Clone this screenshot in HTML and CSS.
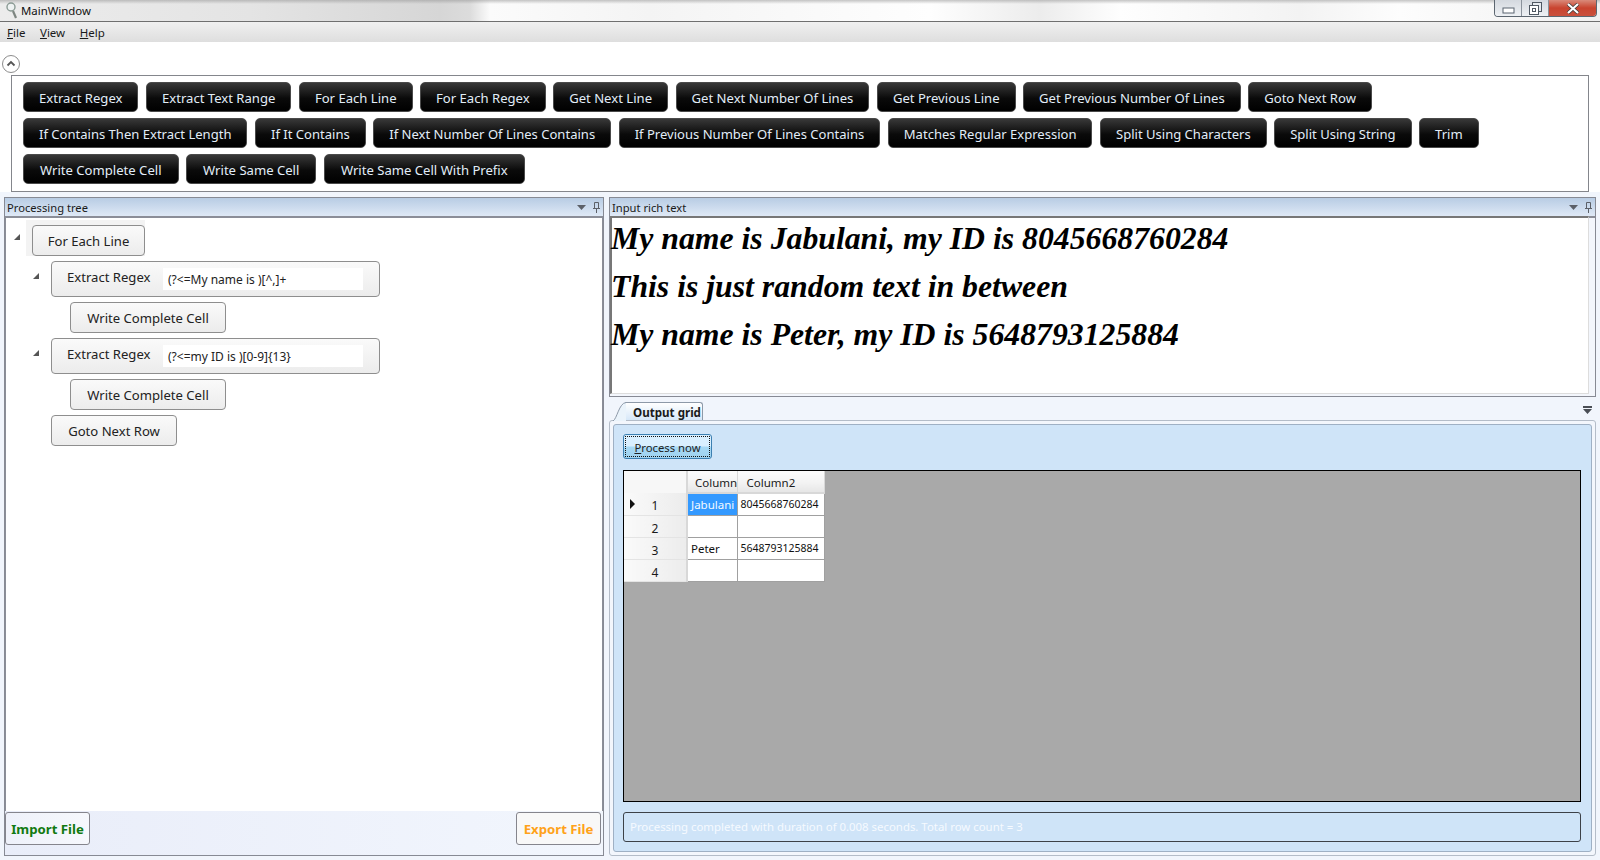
FILE: index.html
```html
<!doctype html>
<html lang="en">
  <head>
    <meta charset="UTF-8" />
    <title>MainWindow</title>
    <link rel="stylesheet" href="styles.css">
  </head>

  <body>
    <div class="titlebar">
      <svg class="app-icon" width="16" height="20" viewBox="0 0 16 20">
        <circle cx="7" cy="6" r="4" fill="#eef2f2" stroke="#8a9a94" stroke-width="1.4"></circle>
        <path d="M9 10l3 7" stroke="#7d8580" stroke-width="2.2" fill="none"></path>
      </svg>
      <span class="title-text">MainWindow</span>
      <div class="window-buttons">
        <div class="win-btn">
          <svg class="win-min" width="13" height="7" viewBox="0 0 13 7"><rect x="1" y="1" width="11" height="5" fill="#fff" stroke="#5a6470"></rect></svg>
        </div>
        <div class="win-btn">
          <svg width="13" height="13" viewBox="0 0 13 13"><rect x="3.5" y="0.5" width="9" height="9" fill="#e8ecf0" stroke="#4f5862"></rect><rect x="0.5" y="3.5" width="9" height="9" fill="#fff" stroke="#4f5862"></rect><rect x="3.5" y="6.5" width="3" height="3" fill="none" stroke="#4f5862"></rect></svg>
        </div>
        <div class="win-btn win-close">
          <svg width="14" height="11" viewBox="0 0 14 11"><path d="M2 1l10 9M12 1L2 10" stroke="#3c3c3c" stroke-width="3.6"></path><path d="M2 1l10 9M12 1L2 10" stroke="#fff" stroke-width="2.2"></path></svg>
        </div>
      </div>
    </div>

    <div class="menubar">
      <span><u>F</u>ile</span>
      <span><u>V</u>iew</span>
      <span><u>H</u>elp</span>
    </div>

    <div class="toolbox-area">
      <div class="expander">
        <svg width="18" height="18" viewBox="0 0 18 18">
          <circle cx="9" cy="9" r="8.5" fill="#fff" stroke="#8d8d8d"></circle>
          <path d="M5.5 10.5L9 7l3.5 3.5" fill="none" stroke="#555" stroke-width="1.8"></path>
        </svg>
      </div>
      <div class="toolbox">
        <div class="tool-row">
          <button class="tool">Extract Regex</button>
          <button class="tool">Extract Text Range</button>
          <button class="tool">For Each Line</button>
          <button class="tool">For Each Regex</button>
          <button class="tool">Get Next Line</button>
          <button class="tool">Get Next Number Of Lines</button>
          <button class="tool">Get Previous Line</button>
          <button class="tool">Get Previous Number Of Lines</button>
          <button class="tool">Goto Next Row</button>
        </div>
        <div class="tool-row tool-row-if">
          <button class="tool">If Contains Then Extract Length</button>
          <button class="tool">If It Contains</button>
          <button class="tool">If Next Number Of Lines Contains</button>
          <button class="tool">If Previous Number Of Lines Contains</button>
          <button class="tool">Matches Regular Expression</button>
          <button class="tool">Split Using Characters</button>
          <button class="tool">Split Using String</button>
          <button class="tool">Trim</button>
        </div>
        <div class="tool-row tool-row-write">
          <button class="tool">Write Complete Cell</button>
          <button class="tool">Write Same Cell</button>
          <button class="tool">Write Same Cell With Prefix</button>
        </div>
      </div>
    </div>

    <div class="dock">
      <div class="pane left-pane">
        <div class="pane-header">
          <span>Processing tree</span>
          <div class="pane-icons">
            <svg width="9" height="5" viewBox="0 0 9 5"><path d="M0 0h9L4.5 5z" fill="#5c6068"></path></svg>
            <svg width="7" height="11" viewBox="0 0 7 11"><path d="M1.5 0.5h4v6h-4zM0 6.5h7M3.5 7v4" fill="none" stroke="#5c6068"></path></svg>
          </div>
        </div>
        <div class="tree">
          <div class="tree-row">
            <span class="tree-arrow"></span>
            <div class="tree-selected"><button class="node node-each">For Each Line</button></div>
          </div>
          <div class="tree-row indent-1">
            <span class="tree-arrow"></span>
            <div class="node node-group">
              <span class="group-label">Extract Regex</span>
              <span class="regex-input">(?&lt;=My name is )[^,]+</span>
            </div>
          </div>
          <div class="tree-row indent-2"><button class="node node-write">Write Complete Cell</button></div>
          <div class="tree-row indent-1">
            <span class="tree-arrow"></span>
            <div class="node node-group">
              <span class="group-label">Extract Regex</span>
              <span class="regex-input">(?&lt;=my ID is )[0-9]{13}</span>
            </div>
          </div>
          <div class="tree-row indent-2"><button class="node node-write">Write Complete Cell</button></div>
          <div class="tree-row indent-3"><button class="node node-goto">Goto Next Row</button></div>
        </div>
        <div class="pane-footer">
          <button class="file-btn import-btn">Import File</button>
          <button class="file-btn export-btn">Export File</button>
        </div>
      </div>

      <div class="right-col">
        <div class="pane input-pane">
          <div class="pane-header">
            <span>Input rich text</span>
            <div class="pane-icons">
              <svg width="9" height="5" viewBox="0 0 9 5"><path d="M0 0h9L4.5 5z" fill="#5c6068"></path></svg>
              <svg width="7" height="11" viewBox="0 0 7 11"><path d="M1.5 0.5h4v6h-4zM0 6.5h7M3.5 7v4" fill="none" stroke="#5c6068"></path></svg>
            </div>
          </div>
          <div class="rich-text">
            <p>My name is Jabulani, my ID is 8045668760284</p>
            <p>This is just random text in between</p>
            <p>My name is Peter, my ID is 5648793125884</p>
          </div>
        </div>

        <div class="tab-strip">
          <div class="tab">
            <svg class="tab-curve" width="13" height="19" viewBox="0 0 13 19"><path d="M0 19C4 17 6 1 13 0.5V19z" fill="#eaf3fb"></path><path d="M0 19C4 17 6 1 13 0.5" fill="none" stroke="#8d99a8"></path></svg>
            Output grid
          </div>
          <svg class="tab-menu" width="9" height="8" viewBox="0 0 9 8"><path d="M0 0h9v2H0zM0 3h9L4.5 8z" fill="#4a4e55"></path></svg>
        </div>
        <div class="tab-body">
          <div class="tab-inner">
            <button class="process-btn"><span><u>P</u>rocess now</span></button>
            <div class="grid-view">
              <table class="grid">
                <tr class="grid-head">
                  <th class="row-head"></th>
                  <th class="col-1">Column</th>
                  <th class="col-2">Column2</th>
                </tr>
                <tr>
                  <th class="row-head"><span class="row-mark"></span>1</th>
                  <td class="cell-selected">Jabulani</td>
                  <td class="cell-num">8045668760284</td>
                </tr>
                <tr>
                  <th class="row-head">2</th>
                  <td></td>
                  <td></td>
                </tr>
                <tr>
                  <th class="row-head">3</th>
                  <td>Peter</td>
                  <td class="cell-num">5648793125884</td>
                </tr>
                <tr>
                  <th class="row-head">4</th>
                  <td></td>
                  <td></td>
                </tr>
              </table>
            </div>
            <div class="status-box">Processing completed with duration of 0.008 seconds. Total row count = 3</div>
          </div>
        </div>
      </div>
    </div>
  </body>
</html>
```

FILE: styles.css
```css
* {
  box-sizing: border-box;
  padding: 0;
  margin: 0;
}

html,
body {
  width: 1600px;
  height: 860px;
  overflow: hidden;
}

body {
  display: flex;
  flex-direction: column;
  background: #f1f5fc;
  font-family: 'Noto Sans', sans-serif;
  font-size: 13px;
  color: #1a1a1a;
}

button {
  font-family: inherit;
}

/* title bar, the blurred desktop behind the glass is only hinted */
.titlebar {
  display: flex;
  align-items: center;
  height: 22px;
  flex: none;
  padding-left: 4px;
  border-bottom: 1px solid #6f6f6f;
  background:
    linear-gradient(180deg, rgba(150, 150, 150, 0.55) 0, rgba(255, 255, 255, 0) 4px),
    linear-gradient(90deg, #ececec 0, #e4e4e4 250px, #d6d6d6 440px, #dcdcdc 470px, #fbfbfb 490px, #f4f4f4 650px, #fefefe 930px, #ececec 1040px, #fefefe 1120px, #f3f3f3 1300px, #fdfdfd 1400px, #f0f0f0 1600px);
}

.app-icon {
  flex: none;
}

.title-text {
  margin-left: 1px;
  font-size: 11.4px;
  color: #111;
}

.window-buttons {
  display: flex;
  align-self: flex-start;
  margin-left: auto;
  margin-right: 3px;
  height: 17px;
  border: 1px solid #5c6670;
  border-top: none;
  border-radius: 0 0 4px 4px;
  overflow: hidden;
}

.win-btn {
  display: flex;
  align-items: center;
  justify-content: center;
  width: 27px;
  background: linear-gradient(180deg, #d4d9df, #eef1f4);
  border-right: 1px solid #8a929b;
}

.win-min {
  margin-top: 4px;
}

.win-close {
  width: 47px;
  border-right: none;
  background: linear-gradient(180deg, #d98a7a 0, #c9442f 50%, #c9503c 100%);
}

.menubar {
  display: flex;
  align-items: center;
  gap: 14.6px;
  height: 20px;
  flex: none;
  padding-left: 7px;
  font-size: 11.5px;
  background: linear-gradient(180deg, #f0f0f0, #dedede);
}

.toolbox-area {
  flex: none;
  height: 150px;
  padding: 13px 11px 0 2px;
  background: #fff;
}

.expander {
  height: 18px;
  margin-bottom: 2px;
}

.expander svg {
  display: block;
}

.toolbox {
  display: flex;
  flex-direction: column;
  gap: 6px;
  height: 117px;
  margin-left: 9px;
  padding: 6px 11px;
  border: 1px solid #84868c;
}

.tool-row {
  display: flex;
  gap: 7.5px;
}

.tool {
  height: 30px;
  padding: 1px 15px 0;
  border: 1px solid #4a4a4a;
  border-radius: 5px;
  background: linear-gradient(180deg, #383838 0, #0a0a0a 55%, #000 100%);
  color: #e2edf8;
  font-size: 13.1px;
}

.tool-row-if .tool {
  font-size: 13.05px;
}

.tool-row-write .tool {
  padding: 1px 16px 0;
}

.dock {
  display: flex;
  gap: 5px;
  flex: 1;
  min-height: 0;
  padding: 5px 4px 4px;
}

.pane {
  display: flex;
  flex-direction: column;
  border: 1px solid #878a94;
}

.left-pane {
  width: 600px;
  flex: none;
  background: linear-gradient(90deg, #e9edf9, #f2f6fd);
}

.pane-header {
  display: flex;
  align-items: center;
  justify-content: space-between;
  height: 20px;
  flex: none;
  padding: 1px 0 0 2px;
  font-size: 11.2px;
  border-bottom: 2px solid #8b8e98;
  background: linear-gradient(180deg, #b8cce4, #dfe9f6);
}

.pane-icons {
  display: flex;
  align-items: center;
  gap: 7px;
  margin-top: -1px;
  padding-right: 3px;
}

.tree {
  flex: 1;
  padding: 2px 0 0 8px;
  background: #fff;
  border-left: 1px solid #8b8e98;
  border-right: 1px solid #8b8e98;
}

.tree-row {
  display: flex;
  align-items: flex-start;
  margin-bottom: 5px;
}

.tree-arrow {
  width: 0;
  height: 0;
  flex: none;
  margin-top: 14px;
  margin-right: 6px;
  border-style: solid;
  border-width: 0 0 6px 6px;
  border-color: transparent transparent #555 transparent;
}

.tree-selected {
  padding: 5px 0 0 6px;
  background: #f3f3f3;
}

.node {
  display: flex;
  align-items: center;
  border: 1px solid #8e8e8e;
  border-radius: 4px;
  background: linear-gradient(180deg, #fafafa, #ececec);
  color: #222;
  font-size: 13.1px;
}

.node-each {
  width: 113px;
  height: 31px;
  justify-content: center;
}

.indent-1 {
  margin-left: 19px;
}

.indent-1 .tree-arrow {
  margin-top: 12px;
  margin-right: 12px;
}

.indent-2 {
  margin-left: 56px;
}

.indent-3 {
  margin-left: 37px;
}

.node-group {
  width: 329px;
  height: 36px;
  padding-left: 15px;
}

.group-label {
  width: 96px;
  margin-top: -5px;
}

.regex-input {
  width: 200px;
  height: 22px;
  padding: 3px 0 0 5px;
  background: #fff;
  font-size: 12px;
}

.node-write {
  width: 156px;
  height: 31px;
  justify-content: center;
}

.node-goto {
  width: 126px;
  height: 31px;
  justify-content: center;
}

.pane-footer {
  display: flex;
  justify-content: space-between;
  height: 44px;
  flex: none;
  padding: 0 2px 0 0;
}

.file-btn {
  width: 85px;
  height: 33px;
  margin-top: 1px;
  border: 1px solid #85858d;
  border-radius: 3px;
  background: linear-gradient(90deg, #eef1fa, #f6f8fd);
  font-size: 13.2px;
  font-weight: bold;
}

.import-btn {
  color: #117a11;
}

.export-btn {
  color: #ffa21a;
  background: #f8f8f8;
}

.right-col {
  display: flex;
  flex-direction: column;
  flex: 1;
  min-width: 0;
}

.input-pane {
  height: 200px;
  flex: none;
  background: #f3f6fc;
}

.rich-text {
  height: 178px;
  margin-top: -2px;
  margin-right: 6px;
  border-left: 2px solid #777;
  border-top: 2px solid #777;
  border-right: 1px solid #ddd;
  border-bottom: 1px solid #ddd;
  background: #fff;
  font-family: 'Liberation Serif', serif;
  font-size: 31.75px;
  font-style: italic;
  font-weight: bold;
  line-height: 48px;
  text-indent: -1px;
  color: #000;
}

.rich-text p:first-child {
  margin-top: -3px;
}

.tab-strip {
  display: flex;
  align-items: flex-end;
  justify-content: space-between;
  height: 23px;
  flex: none;
  padding-left: 16px;
}

.tab {
  position: relative;
  height: 18px;
  width: 78px;
  padding-left: 8px;
  border: 1px solid #8d99a8;
  border-bottom: none;
  border-left: none;
  border-radius: 0 3px 0 0;
  background: linear-gradient(180deg, #ffffff, #d6e7f8);
  font-size: 11.6px;
  font-weight: bold;
  line-height: 20px;
  white-space: nowrap;
}

.tab-curve {
  position: absolute;
  left: -12px;
  top: -1px;
}

.tab-menu {
  margin: 0 4px 6px 0;
}

.tab-body {
  flex: 1;
  min-height: 0;
  padding: 3px;
  border: 1px solid #b4bcc8;
  border-radius: 3px;
  background: #f3f6fc;
}

.tab-inner {
  display: flex;
  flex-direction: column;
  height: 100%;
  padding: 9px 10px 9px 9px;
  border: 1px solid #9fb0c4;
  border-radius: 3px;
  background: #cfe4f8;
}

.process-btn {
  width: 89px;
  height: 25px;
  flex: none;
  padding: 1px;
  border: 1px solid #3c7fb1;
  border-radius: 3px;
  background: linear-gradient(180deg, #d9efff 0, #d9efff 48%, #a7d9f5 52%, #9fd2ef 100%);
  color: #222;
  font-size: 11.3px;
}

.process-btn span {
  display: block;
  height: 100%;
  line-height: 21px;
  border: 1px dotted #111;
}

.grid-view {
  flex: 1;
  min-height: 0;
  margin-top: 11px;
  border: 1px solid #000;
  background: #a9a9a9;
}

.grid {
  border-collapse: collapse;
  table-layout: fixed;
  width: 200px;
  font-size: 11.5px;
}

.grid tr {
  height: 22px;
}

.grid td {
  padding: 0 3px;
  background: #fff;
  border: 1px solid #a0a0a0;
  color: #111;
  overflow: hidden;
  white-space: nowrap;
}

.grid .cell-num {
  font-size: 10.5px;
}

.grid .cell-selected {
  background: #3399ff;
  color: #f4f9ff;
}

.grid th {
  font-weight: normal;
}

.grid-head th {
  height: 21px;
  padding-top: 2px;
  font-size: 11.5px;
  text-align: left;
  background: linear-gradient(180deg, #fbfbfb, #f3f3f3 55%, #e6e6e6);
  border-right: 1px solid #d8d8d8;
  border-bottom: 2px solid #d8d8d8;
}

.grid .col-1 {
  width: 50px;
  padding-left: 7px;
}

.grid .col-2 {
  width: 87px;
  padding-left: 9px;
}

.grid .row-head {
  position: relative;
  width: 63px;
  padding: 4px 0 0 0;
  text-align: center;
  font-size: 12px;
  background: linear-gradient(90deg, #fafafa, #ececec);
  border-right: 2px solid #d8d8d8;
  border-bottom: 1px solid #e4e4e4;
}

.grid-head .row-head {
  background: #f7f7f7;
  border-bottom: none;
}

.row-mark {
  position: absolute;
  left: 6px;
  top: 6px;
  width: 0;
  height: 0;
  border-style: solid;
  border-width: 5px 0 5px 5px;
  border-color: transparent transparent transparent #111;
}

.status-box {
  height: 30px;
  flex: none;
  margin-top: 10px;
  padding-left: 6px;
  border: 1px solid #3c4148;
  border-radius: 3px;
  color: #f6faff;
  font-size: 11.4px;
  line-height: 27px;
}
```
